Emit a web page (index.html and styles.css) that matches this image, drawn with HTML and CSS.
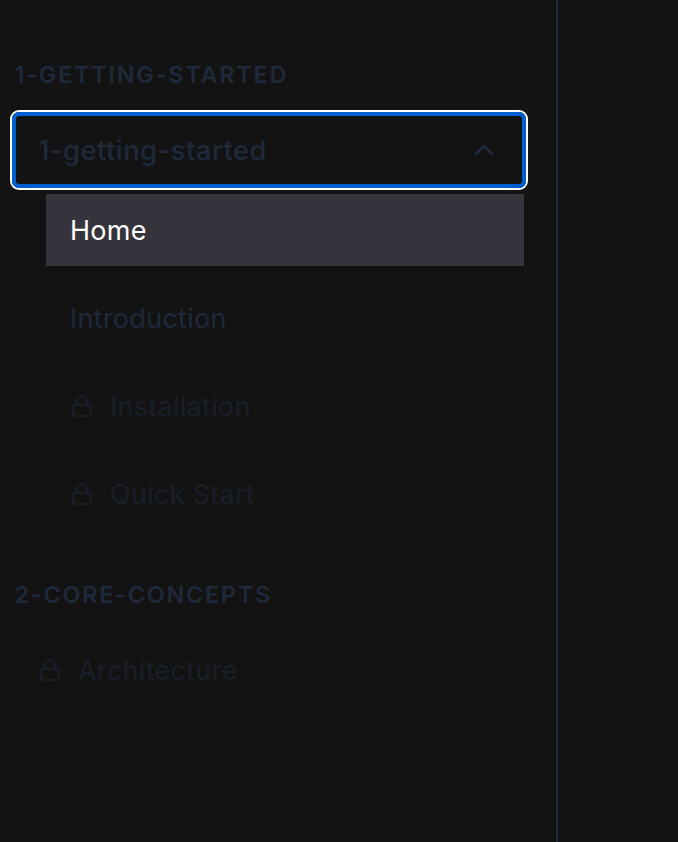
FILE: index.html
```html
<!DOCTYPE html>
<html lang="en">
<head>
<meta charset="utf-8">
<title>Documentation</title>
<link rel="stylesheet" href="styles.css">
</head>
<body>
<svg class="defs" aria-hidden="true">
  <symbol id="lock" viewBox="0 0 24 24"><rect x="3" y="11" width="18" height="11" rx="2"/><path d="M7 11V7a5 5 0 0 1 10 0v4"/></symbol>
</svg>
<nav class="sidebar">
  <section class="section">
    <h2 class="heading">1-GETTING-STARTED</h2>
    <button class="toggle"><span class="toggle-label">1-getting-started</span><svg class="chevron" viewBox="0 0 24 24"><path d="m18 15-6-6-6 6"/></svg></button>
    <div class="children">
      <a class="item active"><span class="label">Home</span></a>
      <a class="item"><span class="label">Introduction</span></a>
      <a class="item locked"><svg class="lock"><use href="#lock"/></svg><span class="label">Installation</span></a>
      <a class="item locked"><svg class="lock"><use href="#lock"/></svg><span class="label">Quick Start</span></a>
    </div>
  </section>
  <section class="section">
    <h2 class="heading heading-second">2-CORE-CONCEPTS</h2>
    <a class="item top locked"><svg class="lock"><use href="#lock"/></svg><span class="label">Architecture</span></a>
  </section>
</nav>
</body>
</html>
```
FILE: styles.css
```css
* { box-sizing: border-box; }
body {
  margin: 0;
  height: 842px;
  overflow: hidden;
  background: #131313;
  color: #1e293b;
  font: 400 27px/40px Inter, sans-serif;
}
.defs { display: none; }
.sidebar {
  width: 558px;
  height: 842px;
  padding: 59px 28px 0 10px;
  border-right: 2px solid #1e293b;
}
.section { margin-bottom: 49px; }
.heading {
  margin: 0 0 21px 4.5px;
  font-size: 23.5px;
  line-height: 32px;
  font-weight: 600;
  letter-spacing: 1.72px;
}
.heading-second { margin-bottom: 23px; letter-spacing: 1.68px; }
.toggle {
  display: flex;
  align-items: center;
  justify-content: space-between;
  width: 514px;
  height: 76px;
  margin: 0 2px;
  padding: 0 22px;
  border: 4px solid #0060d0;
  border-radius: 7px;
  background: transparent;
  box-shadow: 0 0 0 2px #fff;
  color: inherit;
  font: inherit;
  font-size: 27.5px;
  font-weight: 500;
}
.toggle-label { padding-bottom: 1px; letter-spacing: 0.42px; }
.chevron {
  width: 32px;
  height: 32px;
  fill: none;
  stroke: currentColor;
  stroke-width: 2;
  stroke-linecap: round;
  stroke-linejoin: round;
}
.children {
  display: flex;
  flex-direction: column;
  gap: 16px;
  margin: 6px 4px 0 36px;
}
.item {
  display: flex;
  align-items: center;
  gap: 16px;
  height: 72px;
  padding: 0 24px;
}
.label { padding-top: 1px; letter-spacing: 0.28px; }
.active { background: #35343d; color: #fff; }
.locked { color: #181f29; }
.top { margin-left: 4px; }
.lock {
  width: 24px;
  height: 24px;
  fill: none;
  stroke: currentColor;
  stroke-width: 2;
  stroke-linecap: round;
  stroke-linejoin: round;
}
```
